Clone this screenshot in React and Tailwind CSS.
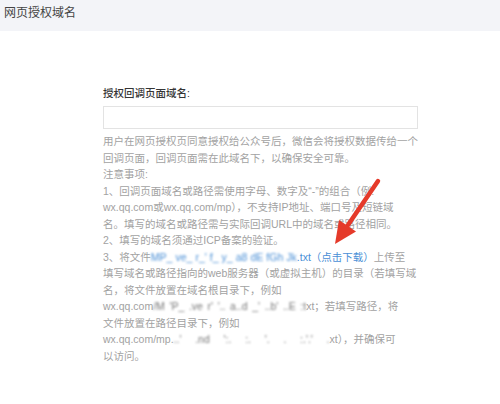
const font = { fontFamily: '"Liberation Sans", "Noto Sans CJK SC", sans-serif' };

function Blur({ w, tokens, className = '' }) {
  return (
    <span
      className={`inline-flex justify-between overflow-hidden whitespace-nowrap align-bottom blur-[0.9px] ${w} ${className}`}
    >
      {tokens.map((t, i) => (
        <span key={i}>{t}</span>
      ))}
    </span>
  );
}

function Line({ children }) {
  return <div className="whitespace-nowrap h-[16.5px]">{children}</div>;
}

export default function App() {
  return (
    <div className="relative w-[500px] h-[404px] bg-white overflow-hidden" style={font}>
      <div className="h-[31px] bg-[#f3f4f8] pl-[4px] pt-[5px] text-[12px] leading-[16px] text-[#444]">
        网页授权域名
      </div>

      <div className="pl-[103px] pt-[54px]">
        <div className="text-[10.5px] leading-[16px] text-[#353535] font-medium">授权回调页面域名:</div>
        <div className="mt-[5px] h-[23px] w-[315px] border border-[#e3e3e3] bg-white" />
        <div className="mt-[4px] w-[320px] text-[10.5px] leading-[16.5px] text-[#a2a2a2]">
          <Line>用户在网页授权页同意授权给公众号后，微信会将授权数据传给一个</Line>
          <Line>回调页面，回调页面需在此域名下，以确保安全可靠。</Line>
          <Line>注意事项:</Line>
          <Line>1、回调页面域名或路径需使用字母、数字及“-”的组合（例:</Line>
          <Line>wx.qq.com或wx.qq.com/mp），不支持IP地址、端口号及短链域</Line>
          <Line>名。填写的域名或路径需与实际回调URL中的域名或路径相同。</Line>
          <Line>2、填写的域名须通过ICP备案的验证。</Line>
          <Line>
            3、将文件
            <span className="text-[#4a8fd6]">
              <Blur w="w-[146px]" tokens={['MP_', 've_', "r_'", 'f_', 'y_', 'a8', 'dE', 'fGh', 'Jk']} />
              .txt（点击下载）
            </span>
            上传至
          </Line>
          <Line>填写域名或路径指向的web服务器（或虚拟主机）的目录（若填写域</Line>
          <Line>名，将文件放置在域名根目录下，例如</Line>
          <Line>
            wx.qq.com
            <Blur w="w-[153px]" tokens={['/M', "'P_", '.ve', "r'", "'..", 'a..d', "_'", "..b'", '..E', ':t']} className="text-[#777]" />
            xt；若填写路径，将
          </Line>
          <Line>文件放置在路径目录下，例如</Line>
          <Line>
            wx.qq.com/mp.
            <Blur w="w-[156px]" tokens={["..'", '.nd', "':.", ':.', "'.", '.', ":.'.'", '.']} className="text-[#777]" />
            xt），并确保可
          </Line>
          <Line>以访问。</Line>
        </div>
      </div>

      <svg className="absolute left-0 top-0" width="500" height="404" viewBox="0 0 500 404">
        <line x1="378" y1="181" x2="348" y2="225" stroke="#e53a2a" strokeWidth="4.5" strokeLinecap="round" />
        <polygon points="335,244 339,220 356,231.5" fill="#e53a2a" />
      </svg>
    </div>
  );
}
